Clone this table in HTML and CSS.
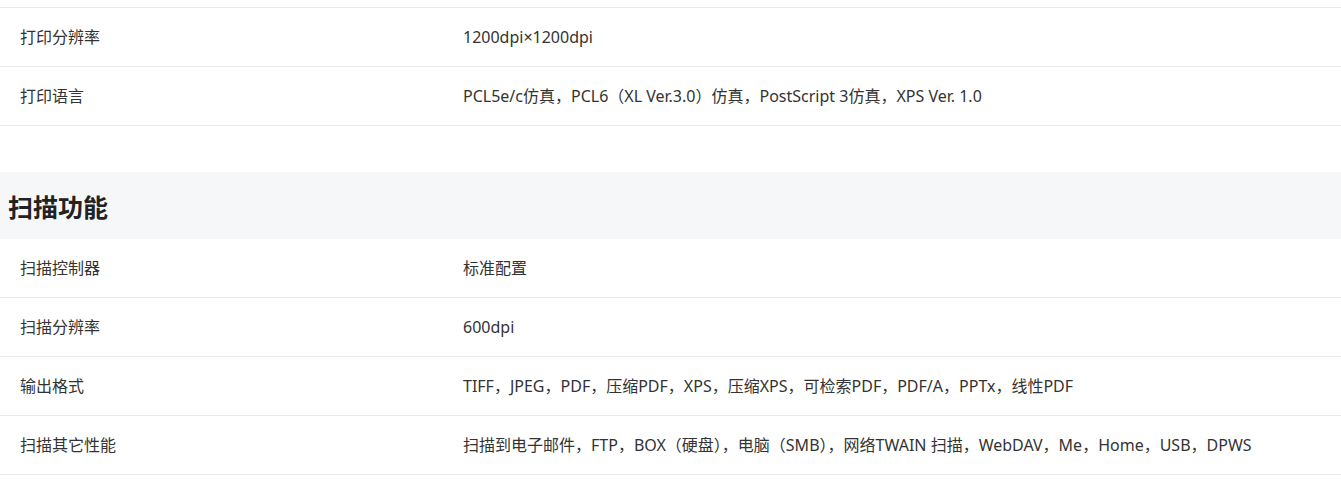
FILE: index.html
```html
<!doctype html>
<html lang="zh-CN">
	<head>
		<meta charset="utf-8">
		<title>产品参数</title>
		<link rel="stylesheet" href="styles.css">
	</head>
	<body>
		<div class="spec-group first">
			<div class="spec-row">
				<div class="spec-name">打印分辨率</div>
				<div class="spec-value">1200dpi×1200dpi</div>
			</div>
			<div class="spec-row">
				<div class="spec-name">打印语言</div>
				<div class="spec-value">PCL5e/c仿真，PCL6（XL Ver.3.0）仿真，PostScript 3仿真，XPS Ver. 1.0</div>
			</div>
		</div>

		<h2 class="spec-title">扫描功能</h2>
		<div class="spec-group">
			<div class="spec-row">
				<div class="spec-name">扫描控制器</div>
				<div class="spec-value">标准配置</div>
			</div>
			<div class="spec-row">
				<div class="spec-name">扫描分辨率</div>
				<div class="spec-value">600dpi</div>
			</div>
			<div class="spec-row">
				<div class="spec-name">输出格式</div>
				<div class="spec-value">TIFF，JPEG，PDF，压缩PDF，XPS，压缩XPS，可检索PDF，PDF/A，PPTx，线性PDF</div>
			</div>
			<div class="spec-row">
				<div class="spec-name">扫描其它性能</div>
				<div class="spec-value">扫描到电子邮件，FTP，BOX（硬盘），电脑（SMB），网络TWAIN 扫描，WebDAV，Me，Home，USB，DPWS</div>
			</div>
		</div>
	</body>
</html>
```

FILE: styles.css
```css
body {
	margin: 0;
	background: #fff;
	color: #333;
	font-family: "Noto Sans", "Noto Sans CJK SC", sans-serif;
	font-size: 16px;
}
.spec-group.first {
	margin-top: 7px;
	border-top: 1px solid #ebebeb;
}
.spec-row {
	display: grid;
	grid-template-columns: 443px 1fr;
	align-items: center;
	height: 58px;
	padding-left: 20px;
	border-bottom: 1px solid #ebebeb;
}
.spec-name, .spec-value {
	line-height: 20px;
}
.spec-title {
	margin: 46px 0 0;
	height: 67px;
	padding-left: 8px;
	display: flex;
	align-items: center;
	background: #f6f7f9;
	color: #222;
	font-size: 25px;
	font-weight: bold;
}
```
